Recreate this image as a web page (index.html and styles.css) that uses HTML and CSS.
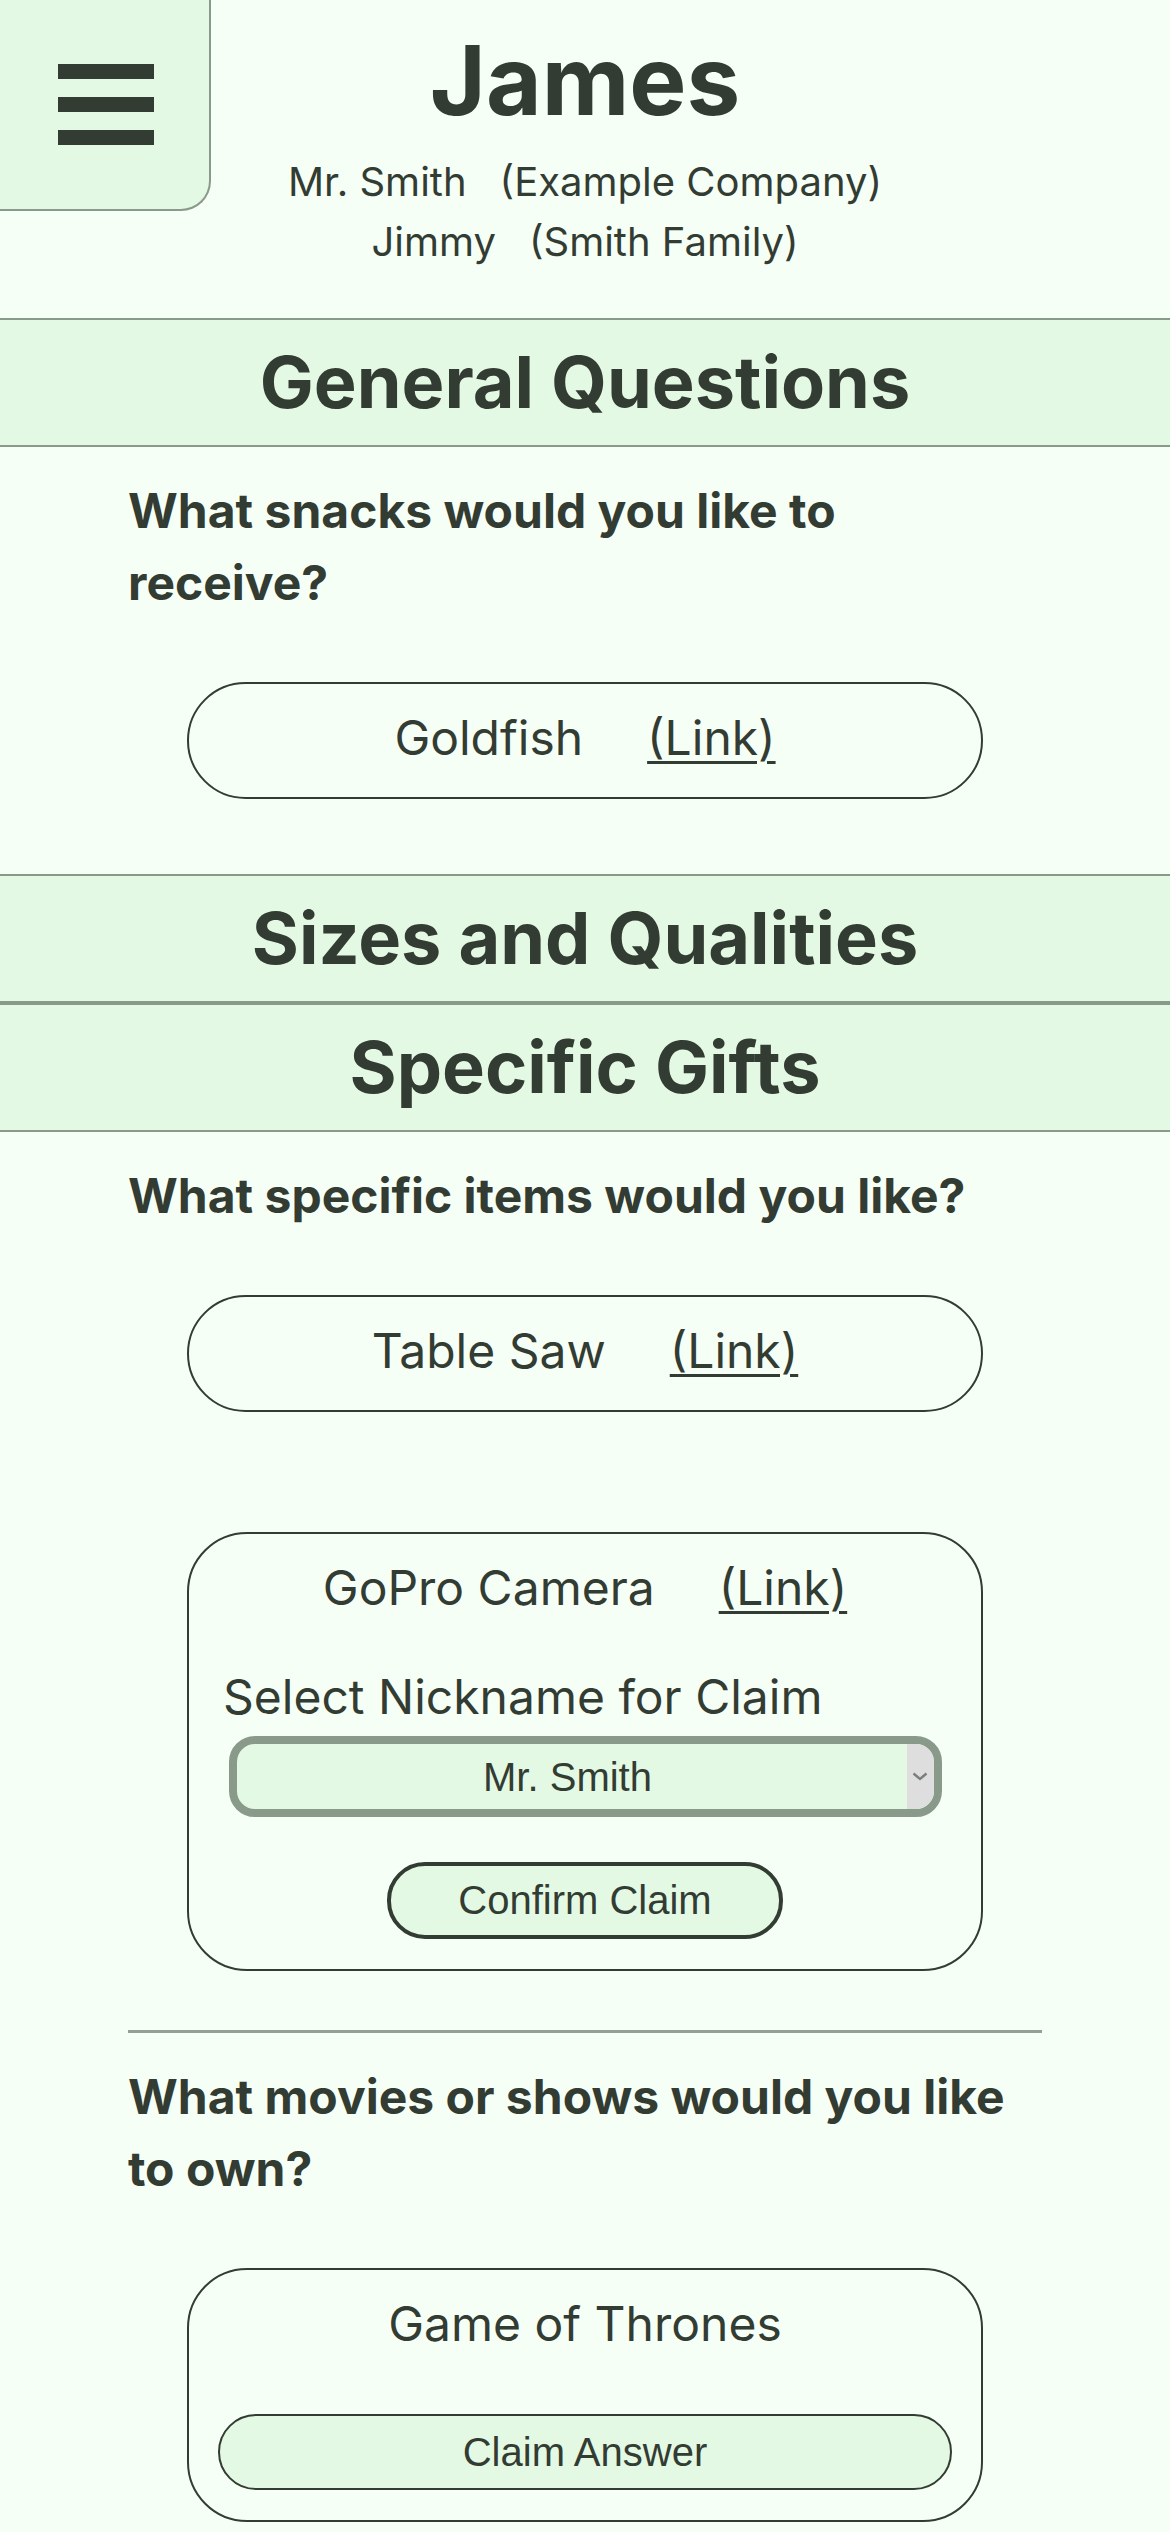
FILE: index.html
```html
<!DOCTYPE html>
<html lang="en">
<head>
<meta charset="utf-8">
<title>James</title>
<link rel="stylesheet" href="styles.css">
</head>
<body>
<button class="menu" aria-label="Menu">
  <span class="bar"></span>
  <span class="bar"></span>
  <span class="bar"></span>
</button>

<header class="top">
  <h1 class="name">James</h1>
  <div class="aliases">
    <div class="alias"><span>Mr. Smith</span><span class="group">(Example Company)</span></div>
    <div class="alias"><span>Jimmy</span><span class="group">(Smith Family)</span></div>
  </div>
</header>

<section class="section">
  <h2 class="section-title">General Questions</h2>
  <div class="section-body">
    <div class="qblock">
      <p class="question">What snacks would you like to receive?</p>
      <div class="answers">
        <div class="pill"><span>Goldfish</span><a class="link" href="#">(Link)</a></div>
      </div>
    </div>
  </div>
</section>

<section class="section">
  <h2 class="section-title">Sizes and Qualities</h2>
</section>

<section class="section">
  <h2 class="section-title">Specific Gifts</h2>
  <div class="section-body">
    <div class="qblock">
      <p class="question">What specific items would you like?</p>
      <div class="answers">
        <div class="pill"><span>Table Saw</span><a class="link" href="#">(Link)</a></div>
        <div class="card">
          <div class="card-title"><span>GoPro Camera</span><a class="link" href="#">(Link)</a></div>
          <label class="nick-label" for="nick">Select Nickname for Claim</label>
          <div class="select-wrap">
            <select class="nick" id="nick"><option>Mr. Smith</option><option>Jimmy</option></select>
            <span class="select-arrow"><svg width="16" height="9" viewBox="0 0 16 9"><path d="M1.5 1.5 L8 7 L14.5 1.5" fill="none" stroke="#7a7f7a" stroke-width="2.4"/></svg></span>
          </div>
          <button class="confirm">Confirm Claim</button>
        </div>
      </div>
    </div>
    <hr class="divider">
    <div class="qblock">
      <p class="question">What movies or shows would you like to own?</p>
      <div class="answers">
        <div class="card card-claim">
          <div class="card-title"><span>Game of Thrones</span></div>
          <button class="claim">Claim Answer</button>
        </div>
      </div>
    </div>
  </div>
</section>
</body>
</html>
```

FILE: styles.css
```css
* { box-sizing: border-box; }

html, body {
  margin: 0;
  padding: 0;
  background: #f6fff6;
}

body {
  font-family: Inter, "Noto Sans", "Liberation Sans", sans-serif;
  color: #333c33;
}

.menu {
  position: fixed;
  top: 0;
  left: 0;
  width: 211px;
  height: 211px;
  padding: 64px 0 0 58px;
  margin: 0;
  background: #e4f9e4;
  border: none;
  border-right: 2px solid #8a9a8a;
  border-bottom: 2px solid #8a9a8a;
  border-bottom-right-radius: 30px;
  display: flex;
  flex-direction: column;
  gap: 18px;
  z-index: 10;
}

.bar {
  display: block;
  width: 96px;
  height: 15px;
  background: #333c33;
}

.top {
  padding: 23px 0 46px;
  text-align: center;
}

.name {
  margin: 0;
  font-size: 96px;
  font-weight: 700;
  line-height: 115px;
}

.aliases {
  margin-top: 14px;
  font-size: 40px;
  line-height: 60px;
}

.group { margin-left: 33px; }

.section-title {
  margin: 0;
  padding: 8px 0 9px;
  background: #e4f9e4;
  border-top: 2px solid #8a9a8a;
  border-bottom: 2px solid #8a9a8a;
  text-align: center;
  font-size: 72px;
  font-weight: 700;
  line-height: 108px;
}

.section-body {
  padding: 0 128px 16px;
}

.question {
  margin: 0;
  padding-top: 28px;
  font-size: 48px;
  font-weight: 700;
  line-height: 72px;
}

.answers {
  display: flex;
  flex-direction: column;
  gap: 120px;
  padding: 63px 59px 59px;
}

.pill {
  border: 2px solid #333c33;
  border-radius: 60px;
  padding: 18px 0 23px;
  text-align: center;
  font-size: 48px;
  line-height: 72px;
}

.link {
  margin-left: 64px;
  color: #333c33;
  text-decoration: underline;
  text-decoration-thickness: 3px;
  text-underline-offset: 6px;
}

.card {
  border: 2px solid #333c33;
  border-radius: 60px;
  padding: 18px 34px 30px;
}

.card-title {
  text-align: center;
  font-size: 48px;
  line-height: 72px;
}

.nick-label {
  display: block;
  margin-top: 37px;
  font-size: 48px;
  line-height: 72px;
}

.select-wrap {
  position: relative;
  width: 713px;
  margin: 3px auto 0;
}

.nick {
  appearance: none;
  -webkit-appearance: none;
  display: block;
  width: 100%;
  height: 81px;
  margin: 0;
  padding: 0 35px 0 0;
  border: 8px solid #8a9a8a;
  border-radius: 26px;
  background: #e4f9e4;
  color: #333c33;
  font-family: "Liberation Sans", Arial, sans-serif;
  font-size: 40px;
  text-align: center;
  text-align-last: center;
}

.select-arrow {
  position: absolute;
  top: 8px;
  bottom: 8px;
  right: 8px;
  width: 27px;
  background: #dedede;
  border-radius: 0 18px 18px 0;
  display: flex;
  align-items: center;
  justify-content: center;
  pointer-events: none;
}

.confirm,
.claim {
  display: block;
  margin: 45px auto 0;
  background: #e4f9e4;
  color: #333c33;
  font-family: "Liberation Sans", Arial, sans-serif;
  font-size: 40px;
  cursor: pointer;
}

.confirm {
  width: 396px;
  height: 77px;
  border: 4px solid #333c33;
  border-radius: 38px;
}

.card-claim {
  padding: 18px 29px 30px;
}

.claim {
  width: 100%;
  height: 76px;
  margin-top: 54px;
  border: 2px solid #333c33;
  border-radius: 38px;
}

.divider {
  margin: 0;
  border: none;
  border-top: 3px solid #979e97;
}
```
